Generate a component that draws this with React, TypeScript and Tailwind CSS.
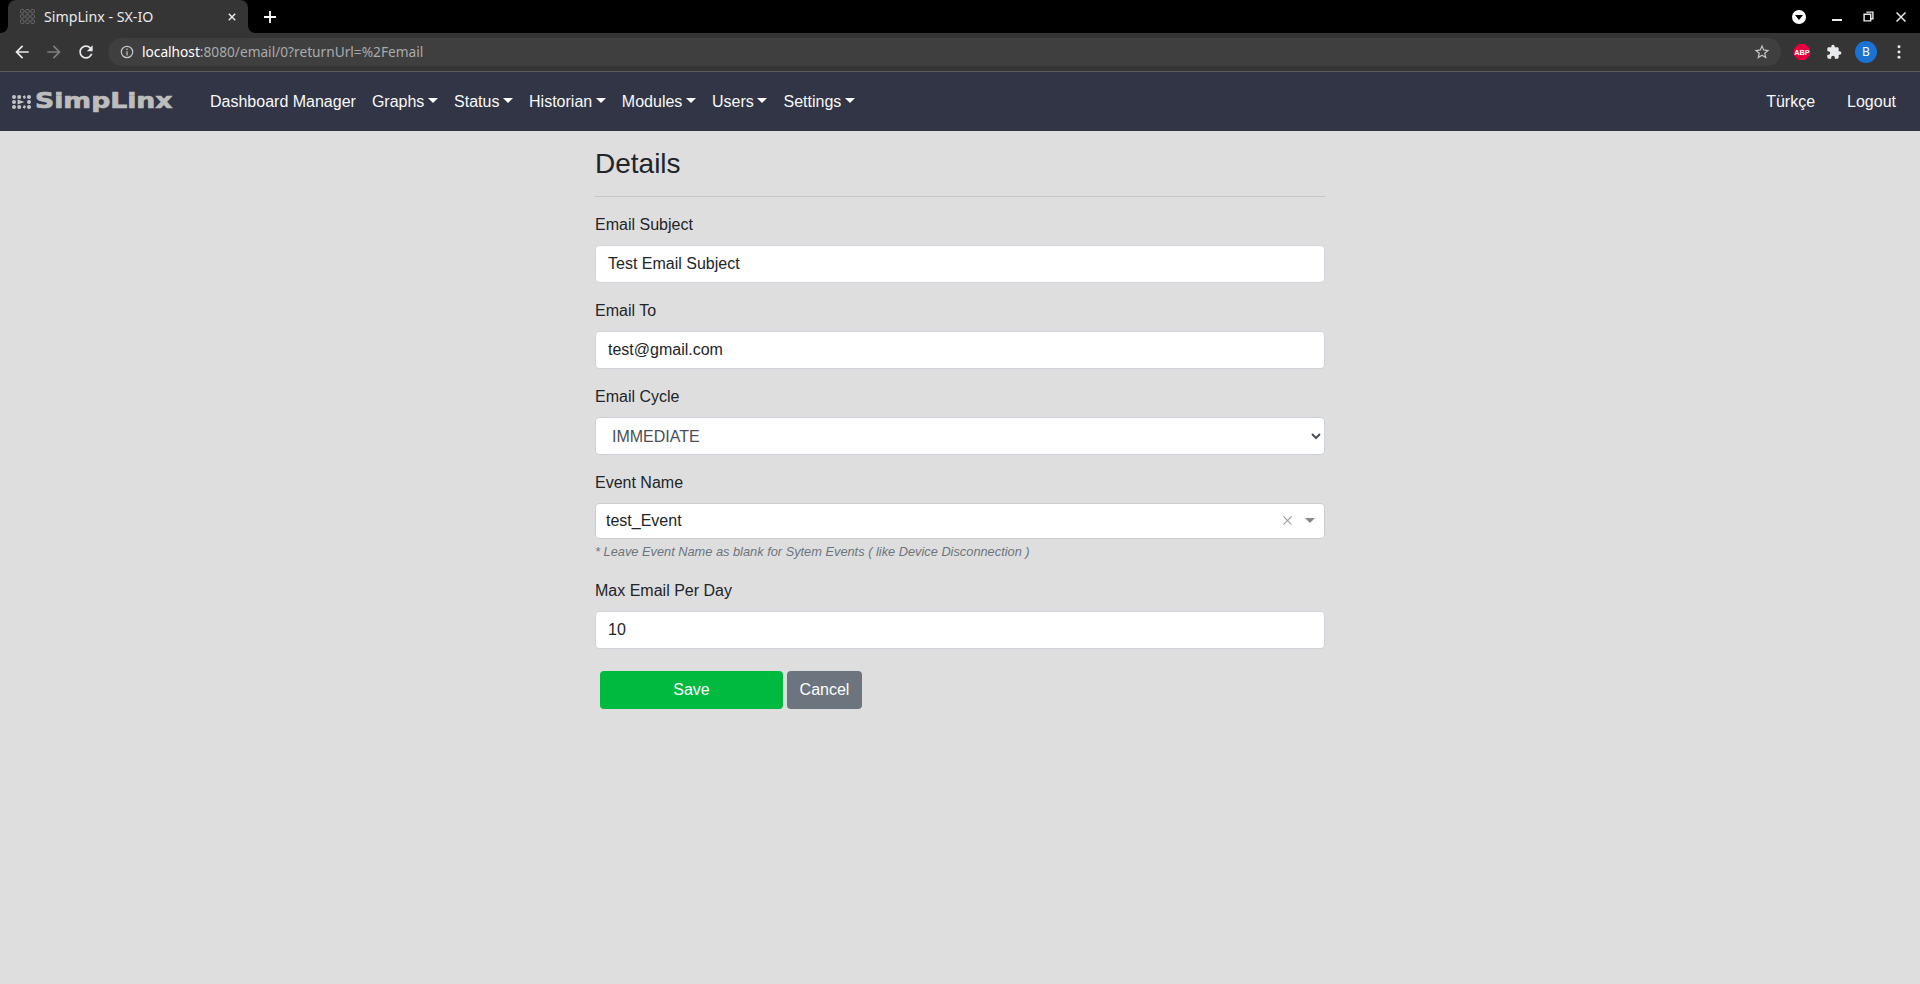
import React from 'react';

const Caret = () => (
    <span className="inline-block ml-[3.68px] align-[4px] border-t-[5px] border-x-[5px] border-b-0 border-x-transparent border-t-white" />
);

const menus = [
    { label: 'Dashboard Manager', caret: false },
    { label: 'Graphs', caret: true },
    { label: 'Status', caret: true },
    { label: 'Historian', caret: true },
    { label: 'Modules', caret: true },
    { label: 'Users', caret: true },
    { label: 'Settings', caret: true },
];

const IconPath = ({ d, className }: { d: string; className: string }) => (
    <svg viewBox="0 0 24 24" className={className} fill="currentColor">
        <path d={d} />
    </svg>
);

const TabFavicon = () => (
    <svg viewBox="0 0 15 15" className="w-[15px] h-[15px]" fill="none" stroke="#686868" strokeWidth="1">
        {[0, 1, 2].map((r) =>
            [0, 1, 2].map((c) => <rect key={`${r}-${c}`} x={c * 5.2 + 0.5} y={r * 5.2 + 0.5} width="3.5" height="3.5" rx="1" />)
        )}
    </svg>
);

const Logo = () => (
    <div className="flex items-center w-[170px] text-[#bdbdbd]">
        <svg viewBox="0 0 19 14" className="w-[19px] h-[14px] shrink-0" fill="#c4c4c4">
            {[2, 7, 12].map((y) => (
                <React.Fragment key={y}>
                    <circle cx="2" cy={y} r="2" />
                    <circle cx="17" cy={y} r="2" />
                </React.Fragment>
            ))}
            <circle cx="7.2" cy="2" r="2" />
            <circle cx="7.2" cy="12" r="2" />
            <path d="M5.6 4.4 L12.4 7 L5.6 9.6 Z M10.6 1.6 L12.8 0.2 L14 2.8 L12 4 Z M10.6 12.4 L12.8 13.8 L14 11.2 L12 10 Z" />
        </svg>
        <span className="ml-[4px] origin-left scale-x-[1.27] font-['DejaVu_Sans',sans-serif] font-bold text-[21px] leading-none [-webkit-text-stroke:0.7px_#bdbdbd]">
            SimpLinx
        </span>
    </div>
);

const BrowserChrome = () => (
    <div className="font-['Noto_Sans',sans-serif]">
        <div className="h-[33px] bg-black flex items-end">
            <svg viewBox="0 0 8 8" className="w-[8px] h-[8px]"><path d="M0 8 C5 8 8 5 8 0 V8 Z" fill="#353535" /></svg>
            <div className="w-[240px] h-[33px] bg-[#353535] rounded-t-[8px] flex items-center pl-[12px] pr-[10px]">
                <TabFavicon />
                <span className="ml-[9px] text-[14.2px] text-[#e8eaed]">SimpLinx - SX-IO</span>
                <svg viewBox="0 0 10 10" className="ml-auto w-[8px] h-[8px] mr-[2px]" stroke="#e8eaed" strokeWidth="1.8">
                    <path d="M1 1 L9 9 M9 1 L1 9" />
                </svg>
            </div>
            <svg viewBox="0 0 8 8" className="w-[8px] h-[8px]"><path d="M0 0 C0 5 3 8 8 8 H0 Z" fill="#353535" /></svg>
            <svg viewBox="0 0 12 12" className="ml-[8px] mb-[10px] w-[12px] h-[12px]" stroke="#ffffff" strokeWidth="1.8">
                <path d="M6 0 V12 M0 6 H12" />
            </svg>
            <div className="ml-auto h-[33px] flex items-center">
                <div className="w-[14px] h-[14px] rounded-full bg-white flex items-center justify-center">
                    <span className="border-t-[5px] border-x-[4px] border-b-0 border-x-transparent border-t-black mt-[1px]" />
                </div>
                <span className="ml-[26px] mt-[6px] w-[10px] h-[2px] bg-[#e8eaed]" />
                <svg viewBox="0 0 10 10" className="ml-[21px] w-[11px] h-[11px]" fill="none" stroke="#e8eaed" strokeWidth="1.3">
                    <path d="M3 1 H9 V7 H7 M1 3 H7 V9 H1 Z" />
                </svg>
                <svg viewBox="0 0 10 10" className="ml-[22px] mr-[14px] w-[10px] h-[10px]" stroke="#e8eaed" strokeWidth="1.5">
                    <path d="M0.5 0.5 L9.5 9.5 M9.5 0.5 L0.5 9.5" />
                </svg>
            </div>
        </div>
        <div className="h-[39px] bg-[#353535] border-b border-[#5c5c5f] flex items-center">
            <IconPath className="ml-[12px] w-[20px] h-[20px] text-[#e8eaed]" d="M20 11H7.83l5.59-5.59L12 4l-8 8 8 8 1.41-1.41L7.83 13H20v-2z" />
            <IconPath className="ml-[12px] w-[20px] h-[20px] text-[#7c7e80] scale-x-[-1]" d="M20 11H7.83l5.59-5.59L12 4l-8 8 8 8 1.41-1.41L7.83 13H20v-2z" />
            <IconPath className="ml-[12px] w-[20px] h-[20px] text-[#e8eaed]" d="M17.65 6.35C16.2 4.9 14.21 4 12 4c-4.42 0-7.99 3.58-7.99 8s3.57 8 7.99 8c3.73 0 6.84-2.55 7.73-6h-2.08c-.82 2.33-3.04 4-5.65 4-3.31 0-6-2.69-6-6s2.69-6 6-6c1.66 0 3.14.69 4.22 1.78L13 11h7V4l-2.35 2.35z" />
            <div className="ml-[12px] w-[1673px] h-[28px] rounded-full bg-[#3f3f3f] flex items-center pl-[12px] pr-[10px]">
                <svg viewBox="0 0 16 16" className="w-[14px] h-[14px] text-[#c4c6c8]" fill="none" stroke="currentColor" strokeWidth="1.4">
                    <circle cx="8" cy="8" r="6.5" />
                    <path d="M8 7 V12 M8 4 V5.6" />
                </svg>
                <span className="ml-[8px] text-[13.7px] text-[#a9abad]"><span className="text-white">localhost</span>:8080/email/0?returnUrl=%2Femail</span>
                <IconPath className="ml-auto w-[18px] h-[18px] text-[#c4c6c8]" d="M22 9.24l-7.19-.62L12 2 9.19 8.63 2 9.24l5.46 4.73L5.82 21 12 17.27 18.18 21l-1.63-7.03L22 9.24zM12 15.4l-3.76 2.27 1-4.28-3.32-2.88 4.38-.38L12 6.1l1.71 4.04 4.38.38-3.32 2.88 1 4.28L12 15.4z" />
            </div>
            <svg viewBox="0 0 16 16" className="ml-[13px] w-[16px] h-[16px]">
                <path d="M4.7 0 H11.3 L16 4.7 V11.3 L11.3 16 H4.7 L0 11.3 V4.7 Z" fill="#e8003c" />
                <text x="8" y="10.6" textAnchor="middle" fontSize="7.4" fontWeight="700" fontFamily="Liberation Sans, sans-serif" fill="#ffffff">ABP</text>
            </svg>
            <IconPath className="ml-[16px] w-[16px] h-[16px] text-[#e8eaed]" d="M20.5 11H19V7c0-1.1-.9-2-2-2h-4V3.5C13 2.12 11.88 1 10.5 1S8 2.12 8 3.5V5H4c-1.1 0-1.99.9-1.99 2v3.8H3.5c1.49 0 2.7 1.21 2.7 2.7s-1.21 2.7-2.7 2.7H2V20c0 1.1.9 2 2 2h3.8v-1.5c0-1.49 1.21-2.7 2.7-2.7 1.49 0 2.7 1.21 2.7 2.7V22H17c1.1 0 2-.9 2-2v-4h1.5c1.38 0 2.5-1.12 2.5-2.5S21.88 11 20.5 11z" />
            <div className="ml-[13px] w-[22px] h-[22px] rounded-full bg-[#1a73d2] flex items-center justify-center text-[12px] text-white">B</div>
            <svg viewBox="0 0 4 16" className="ml-[20px] w-[4px] h-[14px]" fill="#e8eaed">
                <circle cx="2" cy="2" r="1.7" />
                <circle cx="2" cy="8" r="1.7" />
                <circle cx="2" cy="14" r="1.7" />
            </svg>
        </div>
    </div>
);

const Navbar = () => (
    <nav className="h-[59px] bg-[#313545] flex items-center pl-3 pr-4 text-[16px] text-[#f8f9fa]">
        <Logo />
        <ul className="flex ml-[20px]">
            {menus.map((m) => (
                <li key={m.label} className="px-2 whitespace-nowrap">
                    {m.label}
                    {m.caret && <Caret />}
                </li>
            ))}
        </ul>
        <ul className="flex ml-auto">
            <li className="px-2">Türkçe</li>
            <li className="px-2 ml-[16px]">Logout</li>
        </ul>
    </nav>
);

const inputClass = 'block w-full h-[38px] px-3 bg-white border border-[#ced4da] rounded-[4px] text-[16px] text-[#212529] outline-none';

const Field = ({ label, children }: { label: string; children: React.ReactNode }) => (
    <div className="mb-4">
        <label className="block mb-2 leading-6">{label}</label>
        {children}
    </div>
);

const DetailsForm = () => (
    <div className="w-[730px] mx-auto pt-[16px] text-[16px] text-[#212529]">
        <h3 className="text-[28px] leading-[33.6px] font-normal">Details</h3>
        <hr className="mt-[15px] mb-4 border-t border-[#c6c6c6]" />
        <Field label="Email Subject">
            <input className={inputClass} defaultValue="Test Email Subject" />
        </Field>
        <Field label="Email To">
            <input className={inputClass} defaultValue="test@gmail.com" />
        </Field>
        <Field label="Email Cycle">
            <select className={`${inputClass} text-[#495057] pt-[2px]`} defaultValue="IMMEDIATE">
                <option>IMMEDIATE</option>
            </select>
        </Field>
        <Field label="Event Name">
            <div className="h-[36px] bg-white border border-[#cccccc] rounded-[4px] flex items-center pl-[10px]">
                <span>test_Event</span>
                <svg viewBox="0 0 10 10" className="ml-auto w-[9px] h-[9px]" stroke="#999999" strokeWidth="1.2">
                    <path d="M0.5 0.5 L9.5 9.5 M9.5 0.5 L0.5 9.5" />
                </svg>
                <span className="ml-[13px] mr-[9px] border-t-[5px] border-x-[5px] border-b-0 border-x-transparent border-t-[#888888]" />
            </div>
            <small className="block mt-[3px] pb-[2px] text-[12.8px] leading-[19.2px] italic text-[#6c757d]">
                * Leave Event Name as blank for Sytem Events ( like Device Disconnection )
            </small>
        </Field>
        <Field label="Max Email Per Day">
            <input className={inputClass} defaultValue="10" />
        </Field>
        <div className="flex gap-[4px] pl-[5px] mt-[22px]">
            <button className="w-[183px] h-[38px] rounded-[4px] bg-[#00b93f] text-white">Save</button>
            <button className="w-[75px] h-[38px] rounded-[4px] bg-[#6c757d] text-white">Cancel</button>
        </div>
    </div>
);

const App = () => (
    <div className="h-[984px] flex flex-col overflow-hidden bg-[#dedede] font-['Liberation_Sans',Arial,sans-serif]">
        <BrowserChrome />
        <Navbar />
        <DetailsForm />
    </div>
);

export default App;
